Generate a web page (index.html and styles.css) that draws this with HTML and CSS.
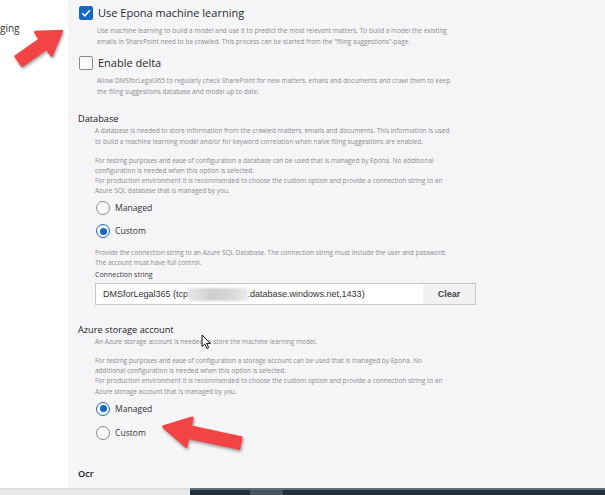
FILE: index.html
```html
<!DOCTYPE html>
<html>
<head>
<meta charset="utf-8">
<link rel="stylesheet" href="styles.css">
</head>
<body>
<div class="app">
  <aside class="side"><div class="side-item">ging</div></aside>
  <main class="panel">
    <div class="cb-row first">
      <span class="cb checked"><svg viewBox="0 0 14 14" width="14" height="14"><path d="M3.2 7.2 L5.9 9.8 L10.9 4.3" fill="none" stroke="#fff" stroke-width="1.5"/></svg></span>
      <span class="cb-label">Use Epona machine learning</span>
    </div>
    <p class="desc cb-desc d1">Use machine learning to build a model and use it to predict the most relevant matters. To build a model the existing<br>emails in SharePoint need to be crawled. This process can be started from the "filing suggestions"-page.</p>
    <div class="cb-row second">
      <span class="cb"></span>
      <span class="cb-label">Enable delta</span>
    </div>
    <p class="desc cb-desc d2">Allow DMSforLegal365 to regularly check SharePoint for new matters, emails and documents and crawl them to keep<br>the filing suggestions database and model up to date.</p>

    <h3 class="heading h-db">Database</h3>
    <p class="desc sec-desc p-a">A database is needed to store information from the crawled matters, emails and documents. This information is used<br>to build a machine learning model and/or for keyword correlation when naive filing suggestions are enabled.</p>
    <p class="desc sec-desc p-b">For testing purposes and ease of configuration a database can be used that is managed by Epona. No additional<br>configuration is needed when this option is selected.<br>For production environment it is recommended to choose the custom option and provide a connection string to an<br>Azure SQL database that is managed by you.</p>
    <div class="radio-row r1"><span class="radio"></span><span class="radio-label">Managed</span></div>
    <div class="radio-row r2"><span class="radio on"></span><span class="radio-label">Custom</span></div>
    <p class="desc sec-desc p-c">Provide the connection string to an Azure SQL Database. The connection string must include the user and password.<br>The account must have full control.</p>
    <div class="field-label">Connection string</div>
    <div class="input">
      <div class="input-text">DMSforLegal365 (tcp:<span class="blur"></span>.database.windows.net,1433)</div>
      <div class="clear-btn">Clear</div>
    </div>

    <h3 class="heading h-az">Azure storage account</h3>
    <p class="desc sec-desc p-d">An Azure storage account is needed to store the machine learning model.</p>
    <p class="desc sec-desc p-e">For testing purposes and ease of configuration a storage account can be used that is managed by Epona. No<br>additional configuration is needed when this option is selected.<br>For production environment it is recommended to choose the custom option and provide a connection string to an<br>Azure storage account that is managed by you.</p>
    <div class="radio-row r3"><span class="radio on"></span><span class="radio-label">Managed</span></div>
    <div class="radio-row r4"><span class="radio"></span><span class="radio-label">Custom</span></div>

    <h3 class="heading h-ocr">Ocr</h3>
  </main>
  <div class="bottom-left"></div>
  <div class="bottom-right"><span class="task-seg"></span></div>

  <svg class="arrow arrow-1" width="60" height="50" viewBox="0 0 60 50">
    <g transform="translate(7 38) rotate(-35)">
      <polygon points="0,-5.5 30,-5.5 30,-14 52,0 30,14 30,5.5 0,5.5" fill="#f24445" stroke="#f24445" stroke-width="3" stroke-linejoin="round"/>
    </g>
  </svg>
  <svg class="arrow arrow-2" width="100" height="50" viewBox="0 0 100 50">
    <g transform="translate(88 33) rotate(192)">
      <polygon points="0,-5.5 52,-5.5 52,-14.5 78,0 52,14.5 52,5.5 0,5.5" fill="#f24445" stroke="#f24445" stroke-width="3" stroke-linejoin="round"/>
    </g>
  </svg>
  <svg class="cursor" width="12" height="16" viewBox="0 0 12 16">
    <path d="M1 1 L1 12.5 L3.8 10 L5.8 14.5 L7.6 13.7 L5.7 9.4 L9.4 9.4 Z" fill="#fff" stroke="#111" stroke-width="1" stroke-linejoin="round"/>
  </svg>
</div>
</body>
</html>
```
FILE: styles.css
```css
* { box-sizing: border-box; }
html, body { margin: 0; padding: 0; }
body {
  width: 605px;
  height: 495px;
  overflow: hidden;
  background: #ffffff;
  font-family: "Open Sans", "Noto Sans", sans-serif;
  color: #222;
}
.app {
  position: relative;
  width: 605px;
  height: 495px;
  display: grid;
  grid-template-columns: 68px 122px 415px;
  grid-template-rows: 488px 7px;
}
.side {
  grid-column: 1;
  grid-row: 1;
  background: #fff;
}
.side-item {
  margin-top: 21px;
  margin-left: 0;
  font-size: 10px;
  line-height: 14px;
  color: #333;
}
.panel {
  grid-column: 2 / 4;
  grid-row: 1;
  background: #f5f5f7;
  padding: 0 0 0 10px;
  display: flex;
  flex-direction: column;
  align-items: flex-start;
}
.cb-row {
  display: flex;
  align-items: center;
  gap: 5px;
  height: 14px;
  margin-left: 1px;
}
.cb-row.first { margin-top: 6px; }
.cb-row.second { margin-top: 9px; }
.cb {
  width: 14px;
  height: 14px;
  border: 1px solid #8a8a8a;
  border-radius: 2px;
  background: #fafafa;
  display: flex;
}
.cb.checked {
  background: #1468c6;
  border-color: #1468c6;
}
.cb.checked svg { margin: -1px; }
.cb-label {
  font-size: 11px;
  line-height: 14px;
  color: #2a2a2a;
}
.desc {
  margin: 0;
  font-size: 6.5px;
  line-height: 10px;
  color: #8b8b8b;
  white-space: nowrap;
}
.cb-desc {
  margin-left: 19px;
  line-height: 11px;
}
.d1 { margin-top: 5px; }
.d2 { margin-top: 5px; }
.heading {
  margin: 0;
  font-size: 9.2px;
  line-height: 12px;
  font-weight: 400;
  color: #1a1a1a;
}
.h-db { margin-top: 16px; }
.h-az { margin-top: 19px; }
.h-ocr { margin-top: 28px; font-weight: 600; }
.sec-desc { margin-left: 17px; }
.p-a { margin-top: 0; line-height: 11px; }
.p-b { margin-top: 9px; }
.p-c { margin-top: 10px; }
.p-d { margin-top: 1px; }
.p-e { margin-top: 9px; line-height: 10.2px; }
.radio-row {
  display: flex;
  align-items: center;
  gap: 5px;
  height: 14px;
  margin-left: 18px;
}
.r1 { margin-top: 5px; }
.r2 { margin-top: 9px; }
.r3 { margin-top: 5px; }
.r4 { margin-top: 10px; }
.radio {
  width: 14px;
  height: 14px;
  border-radius: 50%;
  border: 1px solid #8a8a8a;
  background: #fafafa;
  display: flex;
  align-items: center;
  justify-content: center;
}
.radio.on {
  border: 1.5px solid #1468c6;
}
.radio.on::after {
  content: "";
  width: 7px;
  height: 7px;
  border-radius: 50%;
  background: #1468c6;
}
.radio-label {
  font-size: 8.6px;
  line-height: 14px;
  color: #333;
}
.field-label {
  margin: 2px 0 0 17px;
  font-size: 7px;
  line-height: 10px;
  color: #3c3c3c;
}
.input {
  margin: 3px 0 0 17px;
  width: 381px;
  height: 22px;
  background: #fff;
  border: 1px solid #c6c6c6;
  display: flex;
  align-items: stretch;
}
.input-text {
  flex: 1;
  display: flex;
  align-items: center;
  padding-left: 7px;
  font-family: "Liberation Sans", Arial, sans-serif;
  font-size: 9px;
  color: #333;
  white-space: nowrap;
}
.blur {
  display: inline-block;
  width: 60px;
  height: 13px;
  margin: 0 0 0 -3px;
  background: linear-gradient(90deg, #e6e6e6, #cfcfcf 40%, #d6d6d6 70%, #ebebeb);
  filter: blur(1px);
}
.clear-btn {
  width: 52px;
  background: #f1f1f1;
  display: flex;
  align-items: center;
  justify-content: center;
  font-family: "Liberation Sans", Arial, sans-serif;
  font-size: 9px;
  font-weight: 700;
  color: #444;
}
.bottom-left {
  grid-column: 1 / 3;
  grid-row: 2;
  background: #eaeaea;
  border-top: 2px solid #dedede;
}
.bottom-right {
  grid-column: 3;
  grid-row: 2;
  background: #22323d;
  border-top: 2px solid #5f6d76;
  display: flex;
}
.task-seg {
  margin-left: 60px;
  width: 33px;
  background: #46545d;
}
.arrow {
  position: absolute;
  overflow: visible;
  filter: drop-shadow(1px 2px 1.5px rgba(0,0,0,0.35));
}
.arrow-1 { left: 12px; top: 23px; }
.arrow-2 { left: 152px; top: 410px; }
.cursor {
  position: absolute;
  left: 201px;
  top: 334px;
}
```
